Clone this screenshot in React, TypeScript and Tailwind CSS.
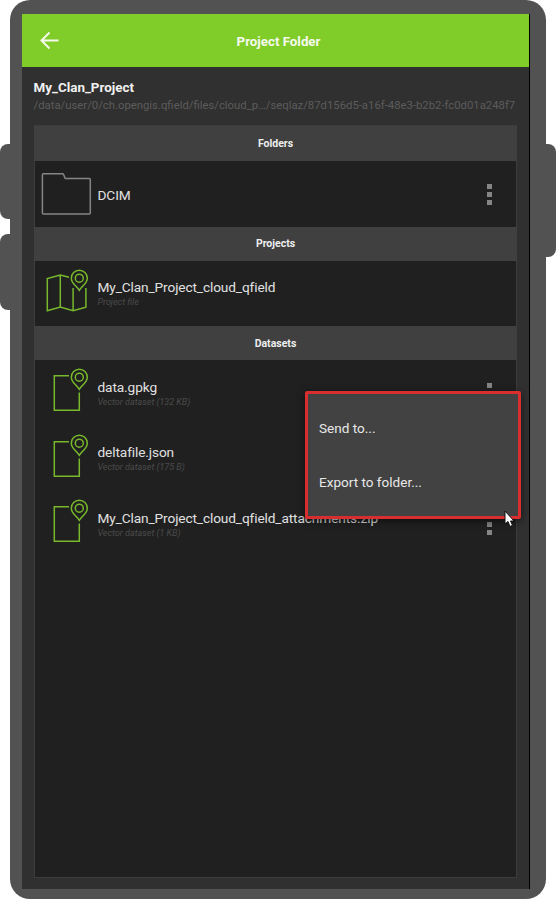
import React from "react";

function Pin() {
  return (
    <>
      <path d="M39.300 28.300C36.500 23.800 31.300 21.500 31.300 16.200a8 8 0 1 1 16 0c0 5.300-5.200 7.600-8 12.100Z" />
      <circle cx="39.300" cy="16.200" r="4" />
    </>
  );
}

function FolderIcon() {
  return (
    <svg width="58" height="64" viewBox="0 0 58 64" fill="none" stroke="#858585" strokeWidth="1.500" strokeLinejoin="round">
      <path d="M3.400 11.700h18.800q1.100 0 1.500 1l1.500 3.900h24.100q1 0 1 1v33.300q0 1-1 1h-45.900q-1 0-1-1v-38.200q0-1 1-1Z" />
    </svg>
  );
}

function MapIcon() {
  return (
    <svg width="58" height="64" viewBox="0 0 58 64" fill="none" stroke="#78b82c" strokeWidth="1.500">
      <path d="M29 15.300l-8.700-2.200-13 3.400v32.200l13-3.700 12.800 3.700 12.800-3.500V26M20.300 13.100V45M33.100 26v22.700" />
      <Pin />
    </svg>
  );
}

function FileIcon() {
  return (
    <svg width="58" height="64" viewBox="0 0 58 64" fill="none" stroke="#78b82c" strokeWidth="1.500">
      <path d="M29 14.800H14.300v34.400h25V31.500" />
      <Pin />
    </svg>
  );
}

function Dots() {
  return (
    <span className="mr-[24.500px] flex flex-col gap-[3px] pt-px">
      <i className="size-[5px] bg-[#858585]" />
      <i className="size-[5px] bg-[#858585]" />
      <i className="size-[5px] bg-[#858585]" />
    </span>
  );
}

function Section({ title, first = false }: { title: string; first?: boolean }) {
  return (
    <div className={`${first ? "h-[35px]" : "h-[34px]"} -mx-px flex shrink-0 items-center justify-center bg-[#404040] pt-px text-[10.500px] font-bold text-[#eeeeee]`}>
      {title}
    </div>
  );
}

function Row({ icon, name, detail, menu = false }: { icon: React.ReactNode; name: string; detail?: string; menu?: boolean }) {
  return (
    <div className="flex h-[65.500px] shrink-0 items-center">
      <div className="mt-px ml-[5px] h-16 w-[57.500px] shrink-0">{icon}</div>
      <div className={`min-w-0 flex-1 whitespace-nowrap ${detail ? "pt-px" : "pt-[3px]"}`}>
        <div className="text-[13.700px] leading-[17px] tracking-[-0.120px] text-[#e0e0e0]">{name}</div>
        {detail && <div className="mt-px text-[9px] leading-[11px] text-[#4b4b4b] italic">{detail}</div>}
      </div>
      {menu && <Dots />}
    </div>
  );
}

export default function App() {
  return (
    <div className="relative h-[900px] w-[556px] overflow-hidden bg-white font-[Roboto,sans-serif]">
      <div className="absolute top-[144px] left-0 h-[75px] w-5 rounded-l-[8px] bg-[#525252]" />
      <div className="absolute top-[234px] left-0 h-[76px] w-5 rounded-l-[8px] bg-[#525252]" />
      <div className="absolute top-[144px] right-0 h-[113px] w-5 rounded-r-[8px] bg-[#525252]" />
      <div className="relative ml-[10px] h-[899px] w-[536px] rounded-[20px] bg-[#525252] pt-[14px] pl-3">
        <div className="flex h-[875px] w-[508px] flex-col border-r border-black bg-[#303030]">
          <header className="relative flex h-[53px] shrink-0 items-center justify-center bg-[#80cc28] text-[13.300px] font-bold text-[#f5f9ee]">
            <svg className="absolute top-[17px] left-[18px]" width="20" height="20" fill="none" stroke="#f4faed" strokeWidth="2">
              <path d="M9.500 1.500 1.500 9.500l8 8M1.500 9.500h17" />
            </svg>
            <span className="mt-0.5 ml-1.5">Project Folder</span>
          </header>
          <div className="h-[58px] shrink-0 pt-[13px] pl-[11.500px] whitespace-nowrap">
            <div className="text-[13.400px] leading-4 font-bold text-[#f0f0f0]">My_Clan_Project</div>
            <div className="text-[11.320px] leading-[18px] text-[#5c5c5c]">/data/user/0/ch.opengis.qfield/files/cloud_p…/seqlaz/87d156d5-a16f-48e3-b2b2-fc0d01a248f7</div>
          </div>
          <main className="ml-3 flex h-[753px] w-[483px] flex-col border border-[#3c3c3c] bg-[#202020]">
            <Section title="Folders" first />
            <Row icon={<FolderIcon />} name="DCIM" menu />
            <Section title="Projects" />
            <Row icon={<MapIcon />} name="My_Clan_Project_cloud_qfield" detail="Project file" />
            <Section title="Datasets" />
            <Row icon={<FileIcon />} name="data.gpkg" detail="Vector dataset (132 KB)" menu />
            <Row icon={<FileIcon />} name="deltafile.json" detail="Vector dataset (175 B)" menu />
            <Row icon={<FileIcon />} name="My_Clan_Project_cloud_qfield_attachments.zip" detail="Vector dataset (1 KB)" menu />
          </main>
        </div>
      </div>
      <div className="absolute top-[391px] left-[305px] flex h-[128px] w-[216px] flex-col rounded-[2px] border-3 border-[#d92e2f] bg-[#424242] pt-[7px] pl-[11px] text-[13.550px] text-[#e8e8e8] shadow-[0_2px_8px_rgba(0,0,0,0.6)]">
        <div className="flex h-[54px] items-center">Send to...</div>
        <div className="flex h-[54px] items-center">Export to folder...</div>
      </div>
      <svg className="absolute top-[510px] left-[504px]" width="12" height="18" viewBox="0 0 12 18">
        <path d="M1 1v13l3-2.500 2 5 2.500-1.200-2-4.300h3.500Z" fill="white" stroke="#111" strokeWidth="1" />
      </svg>
    </div>
  );
}
